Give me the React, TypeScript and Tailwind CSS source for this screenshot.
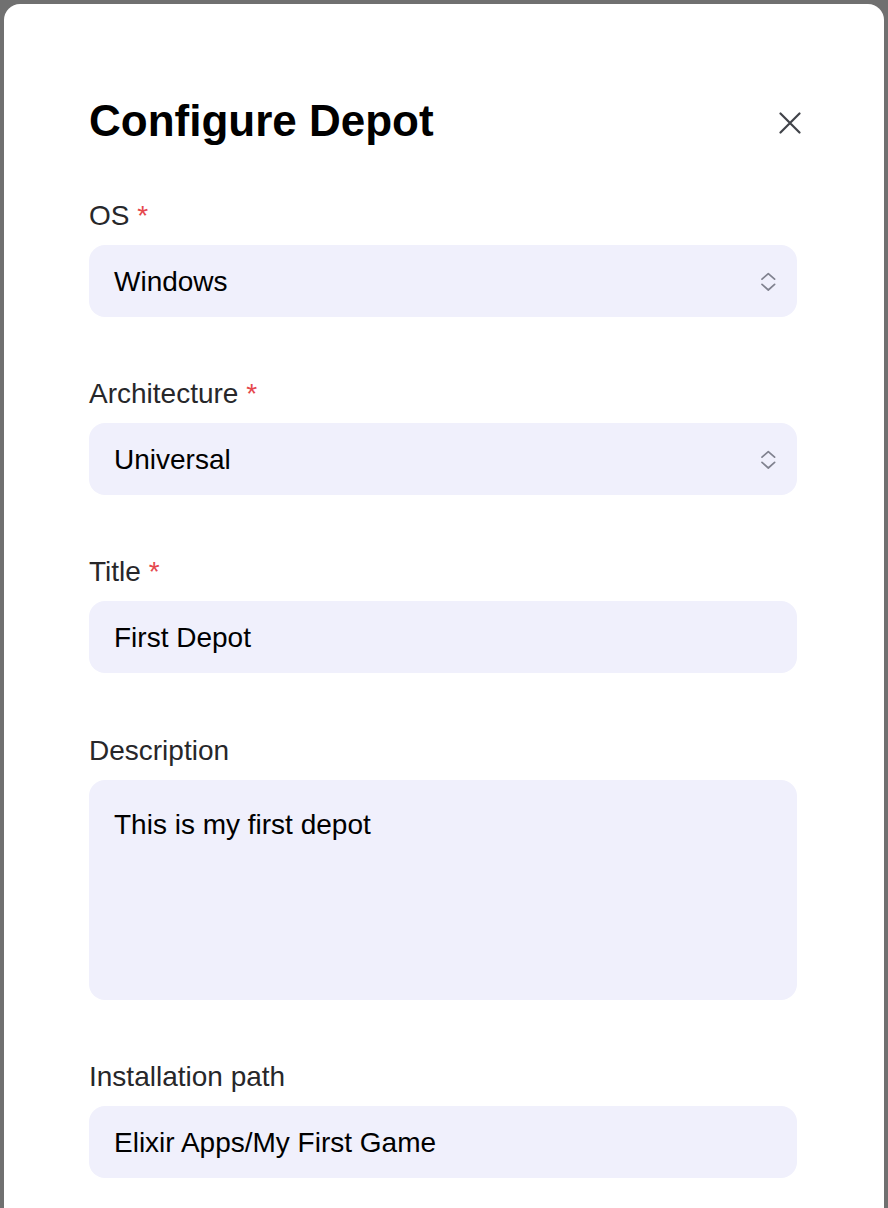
const font = { fontFamily: '"Liberation Sans", Arial, Helvetica, sans-serif' };

function Label({ text, required }: { text: string; required?: boolean }) {
  return (
    <div className="mb-[9px] pt-[2px] text-[28px] leading-[40px] text-[#27272a]">
      {text}
      {required && <span className="text-[#e5484d]"> *</span>}
    </div>
  );
}

function SelectBox({ value }: { value: string }) {
  return (
    <div className="flex h-[72px] items-center justify-between rounded-[16px] bg-[#f0f0fc] pl-[25px] pr-[21px]">
      <span className="pt-[2px] text-[28px] leading-[40px] text-black">{value}</span>
      <svg width="16" height="22" viewBox="0 0 16 22" fill="none" className="mt-[2px]">
        <path
          d="M2 8.2 8.3 2.6 14.6 8.2M2 13.4 8.3 19 14.6 13.4"
          stroke="#80828f"
          strokeWidth="1.7"
          strokeLinecap="round"
          strokeLinejoin="round"
        />
      </svg>
    </div>
  );
}

function TextBox({ value, tall }: { value: string; tall?: boolean }) {
  return (
    <div
      className={
        tall
          ? "h-[220px] rounded-[16px] bg-[#f0f0fc] px-[25px] pt-[25px]"
          : "flex h-[72px] items-center rounded-[16px] bg-[#f0f0fc] px-[25px]"
      }
    >
      <span className="pt-[2px] text-[28px] leading-[40px] text-black">{value}</span>
    </div>
  );
}

export default function App() {
  return (
    <div className="h-[1208px] overflow-hidden bg-[#707070] px-[4px] pt-[4px]" style={font}>
      <div className="min-h-[1300px] rounded-t-[16px] bg-white pl-[85px] pr-[87px] pt-[91px]">
        <div className="flex items-center justify-between">
          <h1 className="text-[44px] font-bold leading-[52px] text-black">Configure Depot</h1>
          <button className="mr-[-4px] mt-[3px]">
            <svg width="22" height="22" viewBox="0 0 22 22" fill="none">
              <path d="M1.5 1.5 20.5 20.5M20.5 1.5 1.5 20.5" stroke="#404349" strokeWidth="2.2" strokeLinecap="round" />
            </svg>
          </button>
        </div>

        <div className="mt-[47px] flex flex-col gap-[55px]">
          <div>
            <Label text="OS" required />
            <SelectBox value="Windows" />
          </div>
          <div>
            <Label text="Architecture" required />
            <SelectBox value="Universal" />
          </div>
          <div>
            <Label text="Title" required />
            <TextBox value="First Depot" />
          </div>
          <div className="mt-[1px]">
            <Label text="Description" />
            <TextBox value="This is my first depot" tall />
          </div>
          <div>
            <Label text="Installation path" />
            <TextBox value="Elixir Apps/My First Game" />
          </div>
        </div>
      </div>
    </div>
  );
}
